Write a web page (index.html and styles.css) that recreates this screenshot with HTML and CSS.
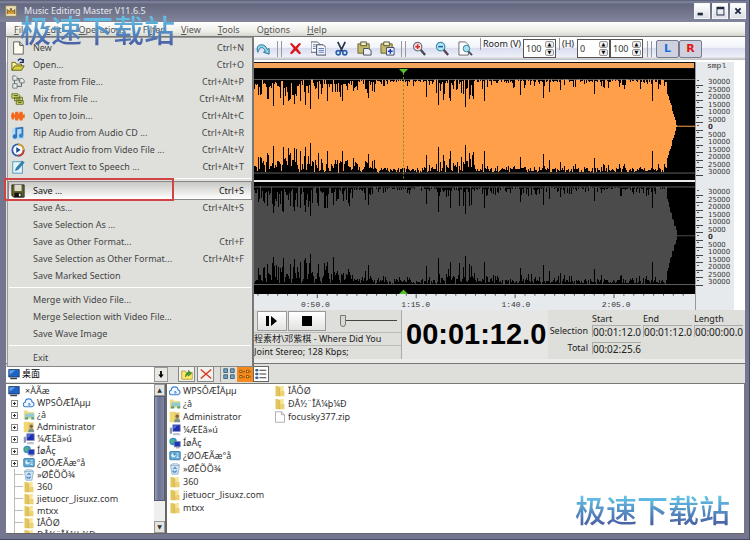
FILE: index.html
```html
<!DOCTYPE html>
<html lang="en">
<head>
    <meta charset="utf-8">
    <meta name="viewport" content="width=device-width, initial-scale=1">
    <title>Music Editing Master V11.6.5</title>
    <link rel="stylesheet" href="styles.css">
</head>
<body>
<!-- shared icons -->
<svg class="sprite" aria-hidden="true">
    <symbol id="i-new" viewBox="0 0 16 16"><path d="M3 1h7l4 4v10H3z" fill="#fffef0" stroke="#555"/><path d="M10 1v4h4" fill="#ddd" stroke="#333"/></symbol>
    <symbol id="i-open" viewBox="0 0 16 16"><path d="M1 14V5h4l1 2h6v3" fill="#fff79a" stroke="#5c5a10"/><path d="M1 14l3-5h11l-3 5z" fill="#d8d040" stroke="#5c5a10"/><path d="M8 3c2-3 5-2 6 1m0-3v4h-4" fill="none" stroke="#1a2a6a" stroke-width="1.5"/></symbol>
    <symbol id="i-pastef" viewBox="0 0 16 16"><path d="M2 1h3l2 2v3H2zM10 4h3l2 2v3h-5zM2 10h5v5H2z" fill="#e9eceb" stroke="#6b7578"/><path d="M7 4h2v3h1M4 6v4M7 13h5V9" fill="none" stroke="#4a5a58"/></symbol>
    <symbol id="i-mix" viewBox="0 0 16 16"><path d="M1 2h7l2 2v3H1zM4 6h9v4H4zM6 10h8v4H6z" fill="#d9dc5a" stroke="#5b6630"/><path d="M3 4h5M6 8h5M8 12h4" stroke="#4b5a2a"/></symbol>
    <symbol id="i-join" viewBox="0 0 16 16"><path d="M0 8l1-4h2l1 3 1-4h3l1 3 1-3h3l1 4 1-2 1 3-1 3-1-1-1 3h-3l-1-3-1 3H5l-1-4-1 3H1z" fill="#f2691d"/></symbol>
    <symbol id="i-rip" viewBox="0 0 16 16"><rect x="1" y="2" width="14" height="13" rx="2" fill="#b4d9f2"/><path d="M6 12V3l7-1v9" fill="none" stroke="#2f74b8" stroke-width="2"/><circle cx="4.500" cy="12" r="2.500" fill="#2f74b8"/><circle cx="11.500" cy="11" r="2.500" fill="#3b86c8"/></symbol>
    <symbol id="i-extract" viewBox="0 0 16 16"><circle cx="8" cy="8" r="6.500" fill="#fff" stroke="#2b5fb0" stroke-width="2"/><path d="M8 1.500a6.500 6.500 0 0 1 6.500 6.500" fill="none" stroke="#e2a52a" stroke-width="2"/><path d="M14.500 8A6.500 6.500 0 0 1 8 14.500" fill="none" stroke="#c63d2c" stroke-width="2"/><path d="M6 4.500v7l5-3.500z" fill="#1d4c94"/></symbol>
    <symbol id="i-speech" viewBox="0 0 16 16"><rect x="2" y="2" width="11" height="13" fill="#e6f5fb" stroke="#3c94bd"/><path d="M5 12l1-3 7-8 2 2-7 8z" fill="#2f86b5" stroke="#1f5f86" stroke-width=".6"/></symbol>
    <symbol id="i-save" viewBox="0 0 16 16"><path d="M1 1h14v14H3l-2-2z" fill="#66632a" stroke="#222"/><path d="M4 1h8v7H4z" fill="#dcdccc"/><path d="M4 10h8v5H4z" fill="#111"/><path d="M9 11h2v3H9z" fill="#eee"/></symbol>
    <symbol id="i-redo" viewBox="0 0 16 16"><path d="M2 12c-2-5 0-8 4-8 3 0 5 2 6 5l2-1v6l-6-2 2-1C9 8 7 7 6 7 4 7 3 9 2 12z" fill="#8fd4ea" stroke="#23718f"/></symbol>
    <symbol id="i-delete" viewBox="0 0 16 16"><path d="M2 3l2-1 4 4 4-4 2 1-4 5 4 5-2 1-4-4-4 4-2-1 4-5z" fill="#d8161c"/></symbol>
    <symbol id="i-copy" viewBox="0 0 16 16"><path d="M0 1h7l3 3v8H0z" fill="#fff" stroke="#545a66"/><path d="M6 4h7l3 3v8H6z" fill="#f4f7ff" stroke="#3b4150"/><path d="M2 4h4M2 6h3M2 8h3M8 8h6M8 10h6M8 12h6" stroke="#5a7bb5"/></symbol>
    <symbol id="i-cut" viewBox="0 0 16 16"><path d="M4 1l5 10M12 1L7 11" stroke="#26344a" stroke-width="1.800" fill="none"/><circle cx="4.500" cy="12.500" r="2.200" fill="none" stroke="#2b62b0" stroke-width="1.800"/><circle cx="11.500" cy="12.500" r="2.200" fill="none" stroke="#2b62b0" stroke-width="1.800"/></symbol>
    <symbol id="i-paste" viewBox="0 0 16 16"><path d="M1 3h12v10H1z" fill="#c4b969" stroke="#6a6433"/><path d="M4 1h6v4H4z" fill="#efedc8" stroke="#55512e"/><path d="M7 8h5l3 2v5H7z" fill="#eef2f8" stroke="#434a58"/></symbol>
    <symbol id="i-pastenew" viewBox="0 0 16 16"><path d="M1 3h12v10H1z" fill="#c4b969" stroke="#6a6433"/><path d="M4 1h6v4H4z" fill="#efedc8" stroke="#55512e"/><path d="M7 7h8v8H7z" fill="#f3f5ff" stroke="#3a4568"/><path d="M11 8.500v5M8.500 11h5" stroke="#1d36c4" stroke-width="1.600"/></symbol>
    <symbol id="i-zin" viewBox="0 0 16 16"><path d="M9 9l5 6" stroke="#474b55" stroke-width="2.500"/><circle cx="6" cy="6" r="4.500" fill="#f7dede" stroke="#6d7480" stroke-width="1.300"/><path d="M6 3.500v5M3.500 6h5" stroke="#d3252b" stroke-width="1.600"/></symbol>
    <symbol id="i-zout" viewBox="0 0 16 16"><path d="M9 9l5 6" stroke="#5b4050" stroke-width="2.500"/><circle cx="6" cy="6" r="4.500" fill="#b5e9f4" stroke="#3f8fae" stroke-width="1.300"/><path d="M3.500 6h5" stroke="#1a5c9c" stroke-width="1.600"/></symbol>
    <symbol id="i-zpage" viewBox="0 0 16 16"><path d="M1 1h7l3 3v11H1z" fill="#fff" stroke="#666"/><path d="M11 11l4 4" stroke="#4b4b58" stroke-width="2"/><circle cx="9" cy="8" r="3.500" fill="#a9e0f0" stroke="#2f7f9e"/></symbol>
    <symbol id="i-desktop" viewBox="0 0 16 16"><path d="M1 2h14v10H1z" fill="#1f63c4" stroke="#16335f"/><path d="M2 3h8L2 9z" fill="#5fa0ea"/><path d="M3 13h9v2H3z" fill="#3a3f4a"/></symbol>
    <symbol id="i-cloud" viewBox="0 0 16 16"><path d="M4 13a3 3 0 0 1-1-6c0-3 2-4.500 4.500-4.500S12 4 12 6.500a3.300 3.300 0 0 1 0 6.500z" fill="#eef6ff" stroke="#3c7fd6" stroke-width="1.500"/><path d="M8 12V8l2 3" fill="none" stroke="#3c7fd6" stroke-width="1.200"/></symbol>
    <symbol id="i-lib" viewBox="0 0 16 16"><path d="M1 2h5l1 2h8v9H1z" fill="#f1dc85"/><path d="M3 6h12v5H3z" fill="#8fcbd5"/><path d="M3 11h4v3H2zM11 11h4v3h-4z" fill="#58a07c"/></symbol>
    <symbol id="i-user" viewBox="0 0 16 16"><path d="M1 1h6l2 1v13H1z" fill="#f0d873"/><path d="M7 2h7v12H7z" fill="#e3c866"/><circle cx="11" cy="7" r="2.300" fill="#866148"/><path d="M7 15c0-7 8-7 8 0z" fill="#7c9488"/></symbol>
    <symbol id="i-pc" viewBox="0 0 16 16"><path d="M5 1h10v9H5z" fill="#1f2fae" stroke="#8c93b5"/><path d="M6 2h5l-5 5z" fill="#5b78e6"/><path d="M1 5h3v8H1z" fill="#9098ac"/><path d="M6 12h8l1 3H5z" fill="#bfc4d4"/></symbol>
    <symbol id="i-net" viewBox="0 0 16 16"><circle cx="5.500" cy="6" r="5" fill="#2f93cf"/><path d="M2 4c2-2 4-2 5 0s-2 4-3 5-2-3-2-5z" fill="#55b46c"/><path d="M7 6h8v7H7z" fill="#1c36b8" stroke="#7883a8"/><path d="M9 14h5v1H9z" fill="#777"/></symbol>
    <symbol id="i-panel" viewBox="0 0 16 16"><rect x="1" y="2" width="14" height="11" rx="1" fill="#5aa9d6" stroke="#2f7099"/><circle cx="6" cy="7" r="3" fill="#d8eef9"/><path d="M6 7V4a3 3 0 0 1 3 3z" fill="#3b7ba6"/><path d="M10 5h3M10 8h3M10 10h3" stroke="#fff"/></symbol>
    <symbol id="i-bin" viewBox="0 0 16 16"><path d="M2 3h12l-2 12H4z" fill="#cfe4f3" stroke="#8ba9be"/><path d="M2 3l3-2h6l3 2z" fill="#e8f3fa" stroke="#8ba9be"/><path d="M6 8l2-2 2 2m0 2l-1 2H6l-1-2" stroke="#2a72c2" stroke-width="1.400" fill="none"/></symbol>
    <symbol id="i-folder" viewBox="0 0 16 16"><path d="M2 1l5 1v13H2z" fill="#e3c659"/><path d="M7 2l6-1v12l-6 2z" fill="#f6e596"/><path d="M9 8h5v7H7z" fill="#ecd274"/><path d="M7.500 3v12" stroke="#c9a638"/></symbol>
    <symbol id="i-file" viewBox="0 0 16 16"><path d="M2 1h8l4 4v10H2z" fill="#fff" stroke="#999"/><path d="M10 1v4h4" fill="none" stroke="#999"/></symbol>
    <symbol id="i-up" viewBox="0 0 16 16"><path d="M1 4h5l1 2h8v9H1z" fill="#ffe96a" stroke="#a2912e"/><path d="M6 12c0-4 1-6 4-6V3l4 4-4 4V9c-2 0-3 1-4 3z" fill="#41a336" stroke="#236b1d" stroke-width=".7"/></symbol>
    <symbol id="i-x" viewBox="0 0 16 16"><path d="M1 2l14 12M15 2L1 14" stroke="#d8371f" stroke-width="1.800"/></symbol>
    <symbol id="i-big" viewBox="0 0 16 16"><path d="M1 1h5v5H1zM10 1h5v5h-5zM1 9h5v5H1zM10 9h5v5h-5z" fill="#6fa6c4" stroke="#2b4b63"/></symbol>
    <symbol id="i-small" viewBox="0 0 16 16"><path d="M1 3h3v3H1zM10 3h3v3h-3zM1 10h3v3H1zM10 10h3v3h-3z" fill="#ffd24a" stroke="#6b3a05"/><path d="M5 5h3M14 5h2M5 12h3M14 12h2" stroke="#6b3a05"/></symbol>
    <symbol id="i-list" viewBox="0 0 16 16"><path d="M1 2h3v2H1zM1 7h3v2H1zM1 12h3v2H1z" fill="#3d78c8" stroke="#234a82"/><path d="M6 3h9M6 8h9M6 13h9" stroke="#333" stroke-width="1.300"/></symbol>
</svg>

<div class="window">
    <header class="titlebar">
        <svg class="app-icon" viewBox="0 0 16 16"><rect x="1" y="1" width="14" height="14" fill="#e9dfb8" stroke="#8a7a4c"/><path d="M3 12V6l3 3 2-5 2 5 3-3v6" fill="#d79a2c" stroke="#5c4a22"/></svg>
        <h1 class="title">Music Editing Master V11.6.5</h1>
        <button class="win-btn" aria-label="Minimize"><svg viewBox="0 0 16 16"><path d="M3 10h6v3H3z"/></svg></button>
        <button class="win-btn" aria-label="Maximize"><svg viewBox="0 0 16 16"><path d="M4 3h9v10H4zM5 6v6h7V6z" fill-rule="evenodd"/></svg></button>
        <button class="win-btn" aria-label="Close"><svg viewBox="0 0 16 16"><path d="M5 5l6 6M11 5l-6 6" stroke="#1f2740" stroke-width="2"/></svg></button>
    </header>

    <nav class="menubar">
        <button><u>F</u>ile</button>
        <button><u>E</u>dit</button>
        <button><u>O</u>perations</button>
        <button>Fi<u>l</u>ter</button>
        <button><u>V</u>iew</button>
        <button><u>T</u>ools</button>
        <button>O<u>p</u>tions</button>
        <button><u>H</u>elp</button>

        <div class="dropdown">
            <button class="item"><svg><use href="#i-new"/></svg>New<kbd>Ctrl+N</kbd></button>
            <button class="item"><svg><use href="#i-open"/></svg>Open...<kbd>Ctrl+O</kbd></button>
            <button class="item"><svg><use href="#i-pastef"/></svg>Paste from File...<kbd>Ctrl+Alt+P</kbd></button>
            <button class="item"><svg><use href="#i-mix"/></svg>Mix from File ...<kbd>Ctrl+Alt+M</kbd></button>
            <button class="item"><svg><use href="#i-join"/></svg>Open to Join...<kbd>Ctrl+Alt+C</kbd></button>
            <button class="item"><svg><use href="#i-rip"/></svg>Rip Audio from Audio CD ...<kbd>Ctrl+Alt+R</kbd></button>
            <button class="item"><svg><use href="#i-extract"/></svg>Extract Audio from Video File ...<kbd>Ctrl+Alt+V</kbd></button>
            <button class="item"><svg><use href="#i-speech"/></svg>Convert Text to Speech ...<kbd>Ctrl+Alt+T</kbd></button>
            <hr>
            <button class="item active"><svg><use href="#i-save"/></svg>Save ...<kbd>Ctrl+S</kbd><span class="marker"></span></button>
            <button class="item">Save As...<kbd>Ctrl+Alt+S</kbd></button>
            <button class="item">Save Selection As ...</button>
            <button class="item">Save as Other Format...<kbd>Ctrl+F</kbd></button>
            <button class="item">Save Selection as Other Format...<kbd>Ctrl+Alt+F</kbd></button>
            <button class="item">Save Marked Section</button>
            <hr>
            <button class="item">Merge with Video File...</button>
            <button class="item">Merge Selection with Video File...</button>
            <button class="item">Save Wave Image</button>
            <hr>
            <button class="item">Exit</button>
        </div>
    </nav>

    <div class="toolbar">
        <div class="tools-left"></div>
        <button class="tool" aria-label="Redo"><svg><use href="#i-redo"/></svg></button>
        <span class="grip"></span>
        <button class="tool" aria-label="Delete"><svg><use href="#i-delete"/></svg></button>
        <button class="tool" aria-label="Copy"><svg><use href="#i-copy"/></svg></button>
        <button class="tool" aria-label="Cut"><svg><use href="#i-cut"/></svg></button>
        <button class="tool" aria-label="Paste"><svg><use href="#i-paste"/></svg></button>
        <button class="tool" aria-label="Paste new"><svg><use href="#i-pastenew"/></svg></button>
        <span class="grip"></span>
        <button class="tool" aria-label="Zoom in"><svg><use href="#i-zin"/></svg></button>
        <button class="tool" aria-label="Zoom out"><svg><use href="#i-zout"/></svg></button>
        <button class="tool" aria-label="Zoom page"><svg><use href="#i-zpage"/></svg></button>
        <label class="room" for="roomv">Room (V)</label>
        <span class="spin"><input id="roomv" value="100"><span><button aria-label="Up">▲</button><button aria-label="Down">▼</button></span></span>
        <label class="room room-h" for="roomh">(H)</label>
        <span class="spin"><input id="roomh" value="0"><span><button aria-label="Up">▲</button><button aria-label="Down">▼</button></span></span>
        <span class="spin"><input aria-label="To" value="100"><span><button aria-label="Up">▲</button><button aria-label="Down">▼</button></span></span>
        <span class="grip grip-end"></span>
        <button class="chan left">L</button>
        <button class="chan right">R</button>
    </div>

    <div class="editor">
        <div class="side"></div>
        <div class="wave-col">
            <div class="overview"></div>
            <svg id="wave" class="wave" viewBox="0 0 576 226" preserveAspectRatio="none"></svg>
            <div class="timeline">
                <svg id="ticks" viewBox="0 0 576 6" preserveAspectRatio="none"></svg>
                <ol><li>0:25.0</li><li>0:50.0</li><li>1:15.0</li><li>1:40.0</li><li>2:05.0</li></ol>
            </div>
        </div>
        <div class="scale">
            <p>smpl</p>
            <ul><li>30000</li><li>25000</li><li>20000</li><li>15000</li><li>10000</li><li>5000</li><li><b>0</b></li><li>5000</li><li>10000</li><li>15000</li><li>20000</li><li>25000</li><li>30000</li></ul>
            <ul><li>30000</li><li>25000</li><li>20000</li><li>15000</li><li>10000</li><li>5000</li><li><b>0</b></li><li>5000</li><li>10000</li><li>15000</li><li>20000</li><li>25000</li><li>30000</li></ul>
        </div>
    </div>

    <div class="transport">
        <div class="player">
            <div class="player-row">
                <button class="play" aria-label="Play"><svg viewBox="0 0 12 12"><path d="M0 1h3v10H0zM5 1l6 5-6 5z"/></svg></button>
                <button class="stop" aria-label="Stop"><svg viewBox="0 0 12 12"><path d="M1 1h10v10H1z"/></svg></button>
                <input class="volume" type="range" min="0" max="100" value="0" aria-label="Volume">
            </div>
            <p>程素材\邓紫棋 - Where Did You</p>
            <p class="format">Joint Stereo; 128 Kbps;</p>
        </div>
        <div class="clock">00:01:12.0</div>
        <div class="times">
            <label class="c2" for="start">Start</label><label for="end">End</label><label for="len">Length</label>
            <span class="name">Selection</span>
            <input id="start" value="00:01:12.0"><input id="end" value="00:01:12.0"><input id="len" value="00:00:00.0">
            <label class="name total" for="total">Total</label><input class="total" id="total" value="00:02:25.6">
        </div>
    </div>

    <div class="filebar">
        <div class="combo">
            <svg><use href="#i-desktop"/></svg>
            <select aria-label="Folder"><option>桌面</option></select>
            <span class="arrow"><svg viewBox="0 0 8 10"><path d="M3 1h2v4h2L4 9 1 5h2z"/></svg></span>
        </div>
        <button class="fbtn" aria-label="Up one level"><svg><use href="#i-up"/></svg></button>
        <button class="fbtn" aria-label="Delete file"><svg><use href="#i-x"/></svg></button>
        <span class="views">
            <button aria-label="Large icons"><svg><use href="#i-big"/></svg></button>
            <button class="on" aria-label="Small icons"><svg><use href="#i-small"/></svg></button>
            <button class="lst" aria-label="List"><svg><use href="#i-list"/></svg></button>
        </span>
    </div>

    <div class="files">
        <div class="tree">
            <ul>
                <li class="root"><svg><use href="#i-desktop"/></svg>×ÀÃæ</li>
                <li><i class="plus"></i><svg><use href="#i-cloud"/></svg>WPSÔÆÎÄµµ</li>
                <li><i class="plus"></i><svg><use href="#i-lib"/></svg>¿â</li>
                <li><i class="plus"></i><svg><use href="#i-user"/></svg>Administrator</li>
                <li><i class="plus"></i><svg><use href="#i-pc"/></svg>¼ÆËã»ú</li>
                <li><i class="plus"></i><svg><use href="#i-net"/></svg>ÍøÂç</li>
                <li><i class="plus"></i><svg><use href="#i-panel"/></svg>¿ØÖÆÃæ°å</li>
                <li><i></i><svg><use href="#i-bin"/></svg>»ØÊÕÕ¾</li>
                <li><i></i><svg><use href="#i-folder"/></svg>360</li>
                <li><i></i><svg><use href="#i-folder"/></svg>jietuocr_Jisuxz.com</li>
                <li><i></i><svg><use href="#i-folder"/></svg>mtxx</li>
                <li><i></i><svg><use href="#i-folder"/></svg>ÏÂÔØ</li>
                <li><i></i><svg><use href="#i-folder"/></svg>ÐÂ½¨ÎÄ¼þ¼Ð</li>
            </ul>
            <div class="scroll">
                <button aria-label="Scroll up">▲</button>
                <span class="thumb"></span>
                <button aria-label="Scroll down">▼</button>
            </div>
        </div>
        <div class="list">
            <ul>
                <li><svg><use href="#i-cloud"/></svg>WPSÔÆÎÄµµ</li>
                <li><svg><use href="#i-lib"/></svg>¿â</li>
                <li><svg><use href="#i-user"/></svg>Administrator</li>
                <li><svg><use href="#i-pc"/></svg>¼ÆËã»ú</li>
                <li><svg><use href="#i-net"/></svg>ÍøÂç</li>
                <li><svg><use href="#i-panel"/></svg>¿ØÖÆÃæ°å</li>
                <li><svg><use href="#i-bin"/></svg>»ØÊÕÕ¾</li>
                <li><svg><use href="#i-folder"/></svg>360</li>
                <li><svg><use href="#i-folder"/></svg>jietuocr_Jisuxz.com</li>
                <li><svg><use href="#i-folder"/></svg>mtxx</li>
            </ul>
            <ul>
                <li><svg><use href="#i-folder"/></svg>ÏÂÔØ</li>
                <li><svg><use href="#i-folder"/></svg>ÐÂ½¨ÎÄ¼þ¼Ð</li>
                <li><svg><use href="#i-file"/></svg>focusky377.zip</li>
            </ul>
        </div>
    </div>
</div>
<div class="stamp stamp-top">极速下载站</div>
<div class="stamp stamp-bottom">极速下载站</div>
<script src="wave.js"></script>
</body>
</html>
```
FILE: styles.css
```css
* {
    box-sizing: border-box;
}
body {
    margin: 0;
    font: 9px/12px "Noto Sans", "Noto Sans CJK SC", sans-serif;
    color: #333;
}
button, input, select {
    font: inherit;
    color: inherit;
    margin: 0;
    padding: 0;
    border: 0;
    background: none;
}
ul, ol {
    list-style: none;
    margin: 0;
    padding: 0;
}
p {
    margin: 0;
}
.sprite {
    display: none;
}

.window {
    display: flex;
    flex-direction: column;
    height: 100vh;
    padding: 0 4px 5px 6px;
    background: #73768e;
    border-right: 1px solid #444a66;
    border-bottom: 1px solid #444a66;
}

/* title */
.titlebar {
    display: flex;
    align-items: center;
    height: 22px;
    gap: 2px;
    margin: 0 -1px 0 -6px;
    background: linear-gradient(#555a75, #8488a0 2px, #63677f 4px, #82859b);
}
.app-icon {
    width: 12px;
    height: 12px;
    margin-left: 5px;
}
.title {
    flex: 1;
    margin: 0 0 0 5px;
    font-size: 9px;
    font-weight: normal;
    color: #e6e8ef;
}
.win-btn {
    width: 16px;
    height: 16px;
    background: linear-gradient(#fff, #dcdfe6);
    border: 1px solid #f5f6f9;
    fill: #1f2740;
}
.win-btn svg {
    display: block;
}

/* menus */
.menubar {
    position: relative;
    display: flex;
    align-items: center;
    gap: 17px;
    height: 15px;
    padding: 1px 8px 0;
    color: #555;
    background: linear-gradient(#fff, #ecece6 70%, #d5d5cf);
    border-bottom: 1px solid #777;
}
.dropdown {
    position: absolute;
    z-index: 5;
    left: 1px;
    top: 15px;
    width: 247px;
    padding: 1px 1px 0;
    background: #dfe0dc;
    border: 1px solid #999;
    border-right: 2px solid #777;
    border-bottom: 1px solid #888;
}
.item {
    position: relative;
    display: flex;
    align-items: center;
    width: 100%;
    height: 17px;
    padding: 0 7px 0 24px;
    color: #444;
    white-space: nowrap;
}
.item > svg {
    width: 14px;
    height: 14px;
    margin: 0 8px 0 -22px;
}
.item kbd {
    margin-left: auto;
    font: inherit;
}
.item.active {
    color: #111;
    background: linear-gradient(#c8c9c5, #fff);
    outline: 1px solid #888;
}
.dropdown hr {
    height: 1px;
    margin: 3px 0;
    border: 0;
    background: #fff;
}
.marker {
    position: absolute;
    left: -5px;
    top: -4px;
    width: 170px;
    height: 23px;
    border: 2px solid #d04544;
}

/* toolbar */
.toolbar {
    display: flex;
    align-items: center;
    height: 23px;
    background: linear-gradient(#fff, #f2f4fb 45%, #dadef0 50%, #eef0f8 85%, #bbb);
    border-left: 1px solid #fff;
}
.tools-left {
    width: 245px;
}
.tool {
    width: 23px;
    height: 18px;
}
.tool svg {
    display: block;
    width: 15px;
    height: 15px;
    margin: 0 auto;
}
.grip {
    width: 5px;
    height: 16px;
    margin: 0 2px;
    border-left: 1px solid #999;
    border-right: 1px solid #999;
}
.grip-end {
    margin: 0 4px;
}
.room {
    align-self: flex-start;
    width: 43px;
    margin-top: 1px;
    padding-left: 2px;
    margin-left: 3px;
    color: #222;
    white-space: nowrap;
    border-left: 1px solid #999;
}
.room-h {
    width: 18px;
}
.spin {
    display: flex;
    align-items: center;
    width: 33px;
    height: 19px;
    padding: 0 2px;
    background: #fff;
    border: 1px solid #555;
}
.spin input {
    width: 19px;
    flex: none;
}
.spin span {
    display: flex;
    flex-direction: column;
    gap: 1px;
}
.spin button {
    width: 9px;
    height: 7px;
    font: 5px/5px "DejaVu Sans", sans-serif;
    color: #000;
    background: #eee;
    border: 1px solid #999;
    border-radius: 2px;
}
.chan {
    width: 23px;
    height: 18px;
    font: bold 11px/14px "DejaVu Sans", sans-serif;
    background: #cfd2de;
    border: 1px solid #777b8c;
    border-radius: 2px;
}
.left {
    color: #1572e0;
}
.right {
    color: #e81515;
}

/* waveform */
.editor {
    display: flex;
    height: 250px;
    padding-top: 2px;
    background: #fff;
}
.side {
    flex: 0 0 113px;
    background: #dfe0dc;
}
.wave-col {
    flex: 1;
    min-width: 0;
}
.overview {
    height: 7px;
    background: #f5a55b;
    border: 1px solid #111;
}
.wave {
    display: block;
    width: 100%;
    height: 225px;
    background: #000;
}
.timeline {
    height: 16px;
    background: #e6eaec;
}
.timeline svg {
    display: block;
    width: 100%;
    height: 5px;
}
.timeline ol {
    display: flex;
    width: 87%;
    margin-left: 8%;
    font: 8px/12px "Liberation Mono", monospace;
    text-align: center;
}
.timeline li {
    flex: 1;
}
.scale {
    width: 39px;
    margin-right: 11px;
    background: #e6eaec;
    border-left: 1px solid #999;
    font: 7px/7px "DejaVu Sans", sans-serif;
}
.scale p {
    padding-left: 11px;
    font: 8px/8px "Liberation Mono", monospace;
}
.scale ul {
    display: flex;
    flex-direction: column;
    justify-content: space-between;
    height: 97px;
    margin-top: 9px;
}
.scale ul + ul {
    margin-top: 13px;
}
.scale li {
    display: flex;
    align-items: center;
    gap: 5px;
}
.scale li::before {
    content: "";
    width: 7px;
    height: 5px;
    border-bottom: 1px solid #444;
    background: linear-gradient(#555, #555) 1px 0 / 2px 1px no-repeat;
}

/* transport */
.transport {
    display: flex;
    height: 53px;
    background: #dededa;
    border-bottom: 4px solid #ececea;
}
.player {
    flex: 0 0 395px;
    padding-left: 248px;
    overflow: hidden;
}
.player-row {
    display: flex;
    align-items: center;
    height: 22px;
    padding-left: 3px;
    gap: 1px;
}
.player-row button {
    width: 30px;
    height: 20px;
    background: linear-gradient(#fff, #e2e2e0);
    border: 1px solid #999;
}
.player-row .stop {
    width: 38px;
}
.player-row svg {
    display: block;
    width: 12px;
    height: 12px;
    margin: 0 auto;
}
.volume {
    appearance: none;
    width: 57px;
    height: 14px;
    margin-left: 13px;
    background: linear-gradient(#444, #444) 0 6px / 100% 1px no-repeat;
}
.volume::-webkit-slider-thumb {
    appearance: none;
    width: 6px;
    height: 12px;
    background: #d8d8d4;
    border: 1px solid #777;
    border-radius: 0 0 3px 3px;
}
.player p {
    height: 13px;
    color: #222;
    white-space: nowrap;
    border-top: 1px solid #bbb;
}
.clock {
    flex: 0 0 147px;
    padding-left: 4px;
    font: bold 29px/48px "Liberation Sans", Arial, sans-serif;
    color: #000;
    background: #e6e6e4;
    border-left: 1px solid #aaa;
}
.times {
    display: grid;
    grid-template-columns: 41px 48px 48px 48px;
    grid-template-rows: 12px 13px 13px;
    column-gap: 3px;
    padding-top: 3px;
    color: #222;
}
.times .c2 {
    grid-column: 2;
}
.times .name {
    text-align: right;
    padding-right: 1px;
}
.times input {
    width: 49px;
    height: 12px;
    font-size: 10px;
    line-height: 10px;
    border-top: 1px solid #aaa;
    border-left: 1px solid #aaa;
}
.times .total {
    margin-top: 4px;
}

/* file browser */
.filebar {
    display: flex;
    align-items: center;
    height: 21px;
    padding-top: 1px;
    background: #dededa;
    border-top: 1px solid #777;
    border-bottom: 1px solid #777;
}
.filebar svg {
    display: block;
    width: 12px;
    height: 12px;
    margin: 0 auto;
}
.combo {
    display: flex;
    align-items: center;
    width: 162px;
    height: 15px;
    padding-left: 2px;
    margin-right: 10px;
    background: #fff;
}
.combo select {
    flex: 1;
    appearance: none;
    padding-left: 2px;
    color: #000;
}
.combo .arrow {
    width: 14px;
    height: 15px;
    padding: 2px 0;
    background: #e8e8e4;
    border: 1px solid #999;
}
.filebar .arrow svg {
    width: 8px;
    height: 9px;
}
.fbtn {
    width: 17px;
    height: 16px;
    margin-right: 2px;
    background: #f1f1ee;
    border: 1px solid #888;
}
.views {
    display: flex;
    margin-left: 4px;
    border-left: 1px solid #999;
}
.views button {
    width: 16px;
    height: 16px;
}
.views .on {
    background: #f58a1c;
}
.views .lst {
    background: #fff;
    border: 1px solid #666;
}
.files {
    display: flex;
    flex: 1;
    min-height: 0;
    background: #fff;
    border-bottom: 1px solid #666;
}
.files svg {
    flex: none;
    width: 12px;
    height: 12px;
    margin-right: 2px;
}
.tree {
    display: flex;
    width: 161px;
    border-right: 2px solid #666;
    overflow: hidden;
}
.tree ul {
    flex: 1;
    padding: 1px 0 0 2px;
}
.files li {
    display: flex;
    align-items: center;
    height: 12px;
    white-space: nowrap;
}
.tree i {
    flex: none;
    width: 9px;
    height: 12px;
    margin: 0 0 0 6px;
    border-left: 1px solid #bbb;
    background: linear-gradient(#bbb, #bbb) 0 5px / 8px 1px no-repeat;
}
/* boxed plus sign of a closed branch */
.tree .plus {
    width: 7px;
    height: 7px;
    margin: 0 5px 0 3px;
    border: 1px solid #888;
    background: linear-gradient(#333, #333) 1px 2px / 3px 1px no-repeat, linear-gradient(#333, #333) 2px 1px / 1px 3px no-repeat, #fff;
}
.tree .root svg {
    margin-right: 5px;
}
.scroll {
    display: flex;
    flex-direction: column;
    width: 11px;
    background: #efefed;
}
.scroll button {
    height: 12px;
    font: 6px/8px "DejaVu Sans", sans-serif;
    background: #e4e4e0;
    border: 1px solid #999;
}
.thumb {
    height: 105px;
    margin-bottom: auto;
    background: linear-gradient(90deg, #9a9fb8, #6d7390 40%, #7f85a0);
    border: 1px solid #555b78;
}
.list {
    display: flex;
    flex: 1;
    padding: 0 0 0 2px;
    border-right: 1px solid #777;
}
.list ul {
    width: 105px;
}
.list li {
    height: 13px;
}

/* stamps over the window */
.stamp {
    position: absolute;
    z-index: 9;
    font: 500 31px/36px "Noto Sans CJK SC", sans-serif;
    color: transparent;
    background: linear-gradient(#62c4e8 15%, #4a62a6 90%);
    background-clip: text;
    -webkit-background-clip: text;
}
.stamp-top {
    left: 20px;
    top: 11px;
}
.stamp-bottom {
    right: 20px;
    bottom: 13px;
}
```
FILE: wave.js
```js
var NS = "http://www.w3.org/2000/svg";
var wave = document.getElementById("wave");
var seed = 7;

function rnd() {
    seed = (seed * 16807) % 2147483647;
    return seed / 2147483647;
}
function add(parent, tag, attrs) {
    var el = document.createElementNS(NS, tag);
    for (var k in attrs) el.setAttribute(k, attrs[k]);
    parent.appendChild(el);
}

// [end column, usual gap, extra gap of a quiet beat, how often]
var parts = [[231, 8, 18, 0.45], [256, 4, 12, 0.4], [317, 3, 5, 0.25], [356, 6, 18, 0.45], [548, 3, 8, 0.3]];
var quiet = {139: 16, 148: 20, 154: 27, 164: 26, 171: 20, 175: 25, 181: 22, 186: 26, 191: 30, 199: 20, 208: 22, 218: 13, 249: 19,
    288: 7, 307: 18, 319: 26, 331: 22, 346: 28, 350: 20, 365: 22, 401: 16, 424: 19, 430: 13, 441: 11, 475: 15, 533: 22};

function channel(mid, half, color) {
    var d = "";
    for (var x = 0; x < 558; x++) {
        var p = 0, top, bottom;
        if (x < 548) {
            while (x >= parts[p][0]) p++;
            top = rnd() * parts[p][1];
            bottom = rnd() * parts[p][1] * 1.5;
            if (rnd() < parts[p][3]) {
                var extra = rnd() * parts[p][2];
                top += extra;
                bottom += extra * (0.5 + rnd() * 0.5);
            }
            if (quiet[x]) {
                top = quiet[x];
                bottom = quiet[x];
            }
        } else {
            top = bottom = 12 + (x - 548) * 3.4 + rnd() * 4;
        }
        d += "M" + x + " " + (mid - half + top).toFixed(1) + "h1V" + (mid + half - bottom).toFixed(1) + "h-1z";
    }
    add(wave, "path", {d: d, fill: color, "shape-rendering": "crispEdges"});
    add(wave, "path", {d: "M0 " + (mid - half) + ".5H576M0 " + (mid + half) + ".5H576", stroke: "#777", opacity: 0.8});
    add(wave, "path", {d: "M558 " + mid + ".5H576", stroke: color});
}
channel(57, 47, "#ff9f49");
channel(167, 49, "#4b4b4b");
add(wave, "path", {d: "M0 112.5H576", stroke: "#e8e8e8", "stroke-width": 2});
add(wave, "path", {d: "M284.500 4V112", stroke: "#6f9a1c", "stroke-dasharray": "2 2"});
add(wave, "path", {d: "M280 0h9l-4.500 4.500zM280 226h9l-4.500 -4.500z", fill: "#52c22c"});

var ticks = "";
for (var t = 0; t < 58; t++) ticks += "M" + (t * 9.89 + 0.5).toFixed(1) + " 0v" + (t % 10 ? 2 : 5);
add(document.getElementById("ticks"), "path", {d: ticks, stroke: "#444"});
```
